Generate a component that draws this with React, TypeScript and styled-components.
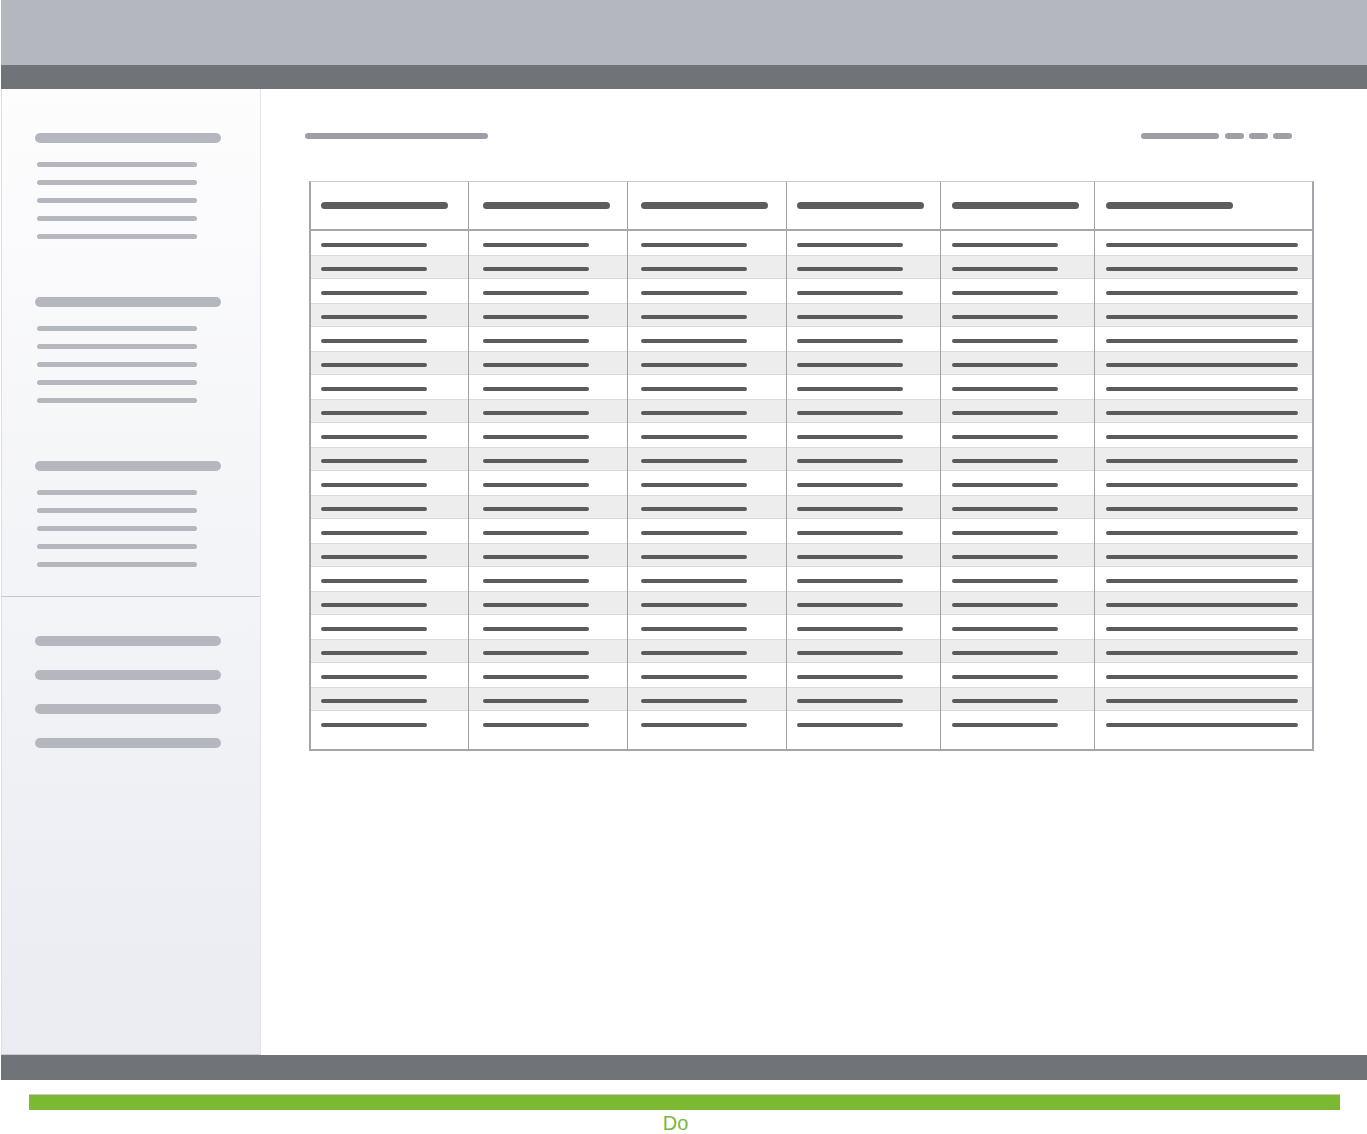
import React from "react";
import styled, { createGlobalStyle } from "styled-components";

const Global = createGlobalStyle`
  html, body { margin: 0; padding: 0; background: #ffffff; }
  body { font-family: "Liberation Sans", Arial, sans-serif; }
  * { box-sizing: border-box; }
`;

const Page = styled.div`
  width: 1367px;
  height: 1134px;
  padding-left: 1px;
  display: flex;
  flex-direction: column;
  background: #ffffff;
  overflow: hidden;
  & > * { flex-shrink: 0; }
`;

const TopBar = styled.div`
  height: 65px;
  background: #b4b7be;
`;

const Band = styled.div<{ $h: number }>`
  height: ${(p) => p.$h}px;
  background: #707377;
`;

const Body = styled.div`
  height: 966px;
  display: flex;
`;

const Sidebar = styled.aside`
  width: 260px;
  flex-shrink: 0;
  display: flex;
  flex-direction: column;
  border-left: 1px solid #dfe0e3;
  border-right: 1px solid #e4e5e8;
  border-bottom: 1px solid #c9cacd;
  background: linear-gradient(180deg, #fdfdfe 0%, #f3f4f7 50%, #eaecf2 100%);
`;

const SideTop = styled.div`
  height: 508px;
  padding: 44px 0 0 33px;
  display: flex;
  flex-direction: column;
  gap: 58px;
  border-bottom: 1px solid #c4c6ca;
`;

const Group = styled.div`
  display: flex;
  flex-direction: column;
`;

const GroupHead = styled.div`
  width: 186px;
  height: 10px;
  border-radius: 5px;
  background: #b4b7be;
  margin-bottom: 19px;
`;

const GroupItems = styled.div`
  display: flex;
  flex-direction: column;
  gap: 13px;
  padding-left: 2px;
`;

const SubLine = styled.div`
  width: 160px;
  height: 5px;
  border-radius: 3px;
  background: #b4b7be;
`;

const SideBottom = styled.div`
  padding: 39px 0 0 33px;
  display: flex;
  flex-direction: column;
  gap: 24px;
`;

const NavBar = styled.div`
  width: 186px;
  height: 10px;
  border-radius: 5px;
  background: #b4b7be;
`;

const Main = styled.main`
  flex: 1;
  min-width: 0;
  padding: 44px 75px 0 44px;
  display: flex;
  flex-direction: column;
`;

const TitleRow = styled.div`
  height: 6px;
  display: flex;
  align-items: center;
  justify-content: space-between;
`;

const Pill = styled.div<{ $w: number }>`
  width: ${(p) => p.$w}px;
  height: 6px;
  border-radius: 3px;
  background: #9d9fa4;
`;

const Pager = styled.div`
  display: flex;
  gap: 5px;
  & > :first-child { margin-right: 1px; }
`;

const Table = styled.div`
  margin: 42px 0 0 4px;
  width: 1005px;
  border-top: 1px solid #c9cbce;
  border-left: 2px solid #a2a6aa;
  border-right: 2px solid #a2a6aa;
  border-bottom: 2px solid #a2a6aa;
`;

const COLS = "157px 159px 159px 154px 154px 218px";

const HeadRow = styled.div`
  display: grid;
  grid-template-columns: ${COLS};
  height: 49px;
  border-bottom: 2px solid #a3a7ab;
`;

const Row = styled.div<{ $alt: boolean; $last: boolean }>`
  display: grid;
  grid-template-columns: ${COLS};
  height: ${(p) => (p.$last ? 38 : 24)}px;
  background: ${(p) => (p.$alt ? "#ededee" : "#ffffff")};
  box-shadow: ${(p) =>
    p.$alt ? "inset 0 1px 0 #d9dadc, inset 0 -1px 0 #d9dadc" : "none"};
`;

const Cell = styled.div<{ $indent: number; $first: boolean; $head?: boolean }>`
  padding-left: ${(p) => p.$indent}px;
  border-left: ${(p) => (p.$first ? "none" : "1px solid #9ca1a6")};
  display: flex;
  align-items: ${(p) => (p.$head ? "center" : "flex-start")};
  padding-top: ${(p) => (p.$head ? 0 : 12)}px;
`;

const HeadBar = styled.div`
  width: 127px;
  height: 7px;
  border-radius: 4px;
  background: #5c5d5f;
`;

const CellLine = styled.div<{ $w: number }>`
  width: ${(p) => p.$w}px;
  height: 4px;
  border-radius: 2px;
  background: #5a5b5d;
`;

const Footer = styled.div`
  padding: 14px 27px 0 28px;
  display: flex;
  flex-direction: column;
  align-items: stretch;
`;

const Progress = styled.div`
  height: 16px;
  background: #7cb932;
  border-top: 1px solid #c8cac8;
`;

const Caption = styled.div`
  margin-top: 5px;
  text-align: center;
  padding-right: 18px;
  font-family: "Liberation Sans", Arial, sans-serif;
  font-size: 20px;
  line-height: 16px;
  color: #7ab83a;
`;

const indents = [10, 14, 13, 10, 11, 11];
const lineWidths = [106, 106, 106, 106, 106, 192];
const rows = Array.from({ length: 21 }, (_, i) => i);
const groups = [0, 1, 2];

export default function App() {
  return (
    <>
      <Global />
      <Page>
        <TopBar />
        <Band $h={24} />
        <Body>
          <Sidebar>
            <SideTop>
              {groups.map((g) => (
                <Group key={g}>
                  <GroupHead />
                  <GroupItems>
                    {[0, 1, 2, 3, 4].map((k) => (
                      <SubLine key={k} />
                    ))}
                  </GroupItems>
                </Group>
              ))}
            </SideTop>
            <SideBottom>
              {[0, 1, 2, 3].map((k) => (
                <NavBar key={k} />
              ))}
            </SideBottom>
          </Sidebar>
          <Main>
            <TitleRow>
              <Pill $w={183} />
              <Pager>
                <Pill $w={78} />
                <Pill $w={19} />
                <Pill $w={19} />
                <Pill $w={19} />
              </Pager>
            </TitleRow>
            <Table>
              <HeadRow>
                {indents.map((ind, c) => (
                  <Cell key={c} $indent={ind} $first={c === 0} $head>
                    <HeadBar />
                  </Cell>
                ))}
              </HeadRow>
              {rows.map((r) => (
                <Row key={r} $alt={r % 2 === 1} $last={r === rows.length - 1}>
                  {indents.map((ind, c) => (
                    <Cell key={c} $indent={ind} $first={c === 0}>
                      <CellLine $w={lineWidths[c]} />
                    </Cell>
                  ))}
                </Row>
              ))}
            </Table>
          </Main>
        </Body>
        <Band $h={25} />
        <Footer>
          <Progress />
          <Caption>Do</Caption>
        </Footer>
      </Page>
    </>
  );
}
